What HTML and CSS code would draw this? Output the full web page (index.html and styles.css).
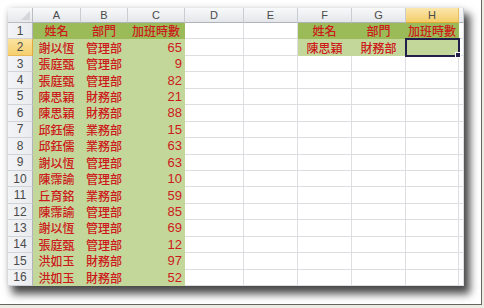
FILE: index.html
```html
<!DOCTYPE html>
<html>
<head>
<meta charset="utf-8">
<link rel="stylesheet" href="styles.css">
</head>
<body>
<div class="frame">
  <div class="sheet">
    <div class="corner"><span class="tri"></span></div>
    <div class="ch">A</div><div class="ch">B</div><div class="ch">C</div><div class="ch">D</div><div class="ch">E</div><div class="ch">F</div><div class="ch">G</div><div class="ch act">H</div><div class="ch"></div>

    <div class="rh">1</div>
    <div class="c dg">姓名</div><div class="c dg">部門</div><div class="c dg">加班時數</div><div class="c"></div><div class="c"></div><div class="c dg">姓名</div><div class="c dg">部門</div><div class="c dg">加班時數</div><div class="c"></div>

    <div class="rh act">2</div>
    <div class="c lg">謝以恆</div><div class="c lg">管理部</div><div class="c lg n">65</div><div class="c"></div><div class="c"></div><div class="c lg">陳思穎</div><div class="c lg">財務部</div><div class="c lg sel"></div><div class="c"></div>

    <div class="rh">3</div>
    <div class="c lg">張庭甄</div><div class="c lg">管理部</div><div class="c lg n">9</div><div class="c"></div><div class="c"></div><div class="c"></div><div class="c"></div><div class="c"></div><div class="c"></div>

    <div class="rh">4</div>
    <div class="c lg">張庭甄</div><div class="c lg">管理部</div><div class="c lg n">82</div><div class="c"></div><div class="c"></div><div class="c"></div><div class="c"></div><div class="c"></div><div class="c"></div>

    <div class="rh">5</div>
    <div class="c lg">陳思穎</div><div class="c lg">財務部</div><div class="c lg n">21</div><div class="c"></div><div class="c"></div><div class="c"></div><div class="c"></div><div class="c"></div><div class="c"></div>

    <div class="rh">6</div>
    <div class="c lg">陳思穎</div><div class="c lg">財務部</div><div class="c lg n">88</div><div class="c"></div><div class="c"></div><div class="c"></div><div class="c"></div><div class="c"></div><div class="c"></div>

    <div class="rh">7</div>
    <div class="c lg">邱鈺儒</div><div class="c lg">業務部</div><div class="c lg n">15</div><div class="c"></div><div class="c"></div><div class="c"></div><div class="c"></div><div class="c"></div><div class="c"></div>

    <div class="rh">8</div>
    <div class="c lg">邱鈺儒</div><div class="c lg">業務部</div><div class="c lg n">63</div><div class="c"></div><div class="c"></div><div class="c"></div><div class="c"></div><div class="c"></div><div class="c"></div>

    <div class="rh">9</div>
    <div class="c lg">謝以恆</div><div class="c lg">管理部</div><div class="c lg n">63</div><div class="c"></div><div class="c"></div><div class="c"></div><div class="c"></div><div class="c"></div><div class="c"></div>

    <div class="rh">10</div>
    <div class="c lg">陳霈諭</div><div class="c lg">管理部</div><div class="c lg n">10</div><div class="c"></div><div class="c"></div><div class="c"></div><div class="c"></div><div class="c"></div><div class="c"></div>

    <div class="rh">11</div>
    <div class="c lg">丘育銘</div><div class="c lg">業務部</div><div class="c lg n">59</div><div class="c"></div><div class="c"></div><div class="c"></div><div class="c"></div><div class="c"></div><div class="c"></div>

    <div class="rh">12</div>
    <div class="c lg">陳霈諭</div><div class="c lg">管理部</div><div class="c lg n">85</div><div class="c"></div><div class="c"></div><div class="c"></div><div class="c"></div><div class="c"></div><div class="c"></div>

    <div class="rh">13</div>
    <div class="c lg">謝以恆</div><div class="c lg">管理部</div><div class="c lg n">69</div><div class="c"></div><div class="c"></div><div class="c"></div><div class="c"></div><div class="c"></div><div class="c"></div>

    <div class="rh">14</div>
    <div class="c lg">張庭甄</div><div class="c lg">管理部</div><div class="c lg n">12</div><div class="c"></div><div class="c"></div><div class="c"></div><div class="c"></div><div class="c"></div><div class="c"></div>

    <div class="rh">15</div>
    <div class="c lg">洪如玉</div><div class="c lg">財務部</div><div class="c lg n">97</div><div class="c"></div><div class="c"></div><div class="c"></div><div class="c"></div><div class="c"></div><div class="c"></div>

    <div class="rh">16</div>
    <div class="c lg">洪如玉</div><div class="c lg">財務部</div><div class="c lg n">52</div><div class="c"></div><div class="c"></div><div class="c"></div><div class="c"></div><div class="c"></div><div class="c"></div>
  </div>
</div>
</body>
</html>
```

FILE: styles.css
```css
html, body {
  margin: 0;
  padding: 0;
}
body {
  width: 484px;
  height: 308px;
  background: #ecece4;
  overflow: hidden;
}
.frame {
  width: 482px;
  height: 305px;
  background: #ffffff;
  border-right: 1px solid #66665a;
  border-bottom: 1px solid #66665a;
  padding: 8px 0 0 8px;
  box-sizing: border-box;
}
.sheet {
  width: 456px;
  height: 278px;
  display: grid;
  grid-template-columns: 25px 48px 47px 57px 59px 54px 54px 54px 53px 5px;
  grid-template-rows: 15px repeat(16, 16.4375px);
  background: #ffffff;
  box-shadow: 5px 7px 8px 1px rgba(0, 0, 0, 0.7), 0 0 6px rgba(0, 0, 0, 0.12);
  font-family: "Noto Sans CJK TC", "Noto Sans", sans-serif;
}
.corner {
  position: relative;
  background: linear-gradient(#f7f8f9, #e6e8eb);
  border-right: 1px solid #b9bcc1;
  border-bottom: 1px solid #b9bcc1;
  box-sizing: border-box;
}
.tri {
  position: absolute;
  right: 2px;
  bottom: 2px;
  width: 0;
  height: 0;
  border-left: 9px solid transparent;
  border-bottom: 9px solid #d3d6da;
}
.ch {
  background: linear-gradient(#f8f9fa, #e4e7ea);
  border-right: 1px solid #c9ccd1;
  border-bottom: 1px solid #b0b4ba;
  box-sizing: border-box;
  display: flex;
  align-items: center;
  justify-content: center;
  font-family: "Liberation Sans", sans-serif;
  font-size: 11px;
  color: #4a4a4a;
}
.ch.act {
  background: linear-gradient(#fbe7ad, #f4cd6a);
  border-bottom: 1px solid #e0a93a;
  border-right: 1px solid #e7bf63;
}
.rh {
  background: linear-gradient(90deg, #f3f4f6, #e9ebee);
  border-right: 1px solid #b0b4ba;
  border-bottom: 1px solid #d0d3d8;
  box-sizing: border-box;
  display: flex;
  align-items: center;
  justify-content: center;
  font-family: "Liberation Sans", sans-serif;
  font-size: 12px;
  color: #4a4a4a;
}
.rh.act {
  background: linear-gradient(#fbe3a0, #f5cf6e);
  border-bottom: 1px solid #e6b858;
  border-right: 1px solid #e0a93a;
}
.c {
  border-right: 1px solid #dcdee1;
  border-bottom: 1px solid #dcdee1;
  box-sizing: border-box;
  display: flex;
  align-items: center;
  justify-content: center;
  font-size: 12px;
  font-weight: 500;
  color: #cc1a1a;
  white-space: nowrap;
  overflow: hidden;
}
.c.dg {
  background: #9bbb59;
  border-color: #9bbb59;
}
.c.lg {
  background: #c4d79b;
  border-color: #c4d79b;
}
.c.n {
  justify-content: flex-end;
  padding-right: 2px;
  font-family: "Liberation Sans", sans-serif;
  font-size: 13px;
  font-weight: normal;
}
.c.sel {
  position: relative;
  overflow: visible;
  outline: 2px solid #221f4a;
  outline-offset: -1px;
  z-index: 1;
}
.c.sel::after {
  content: "";
  position: absolute;
  right: -3px;
  bottom: -3px;
  width: 4px;
  height: 4px;
  background: #221f4a;
  border: 1px solid #ffffff;
}
```
